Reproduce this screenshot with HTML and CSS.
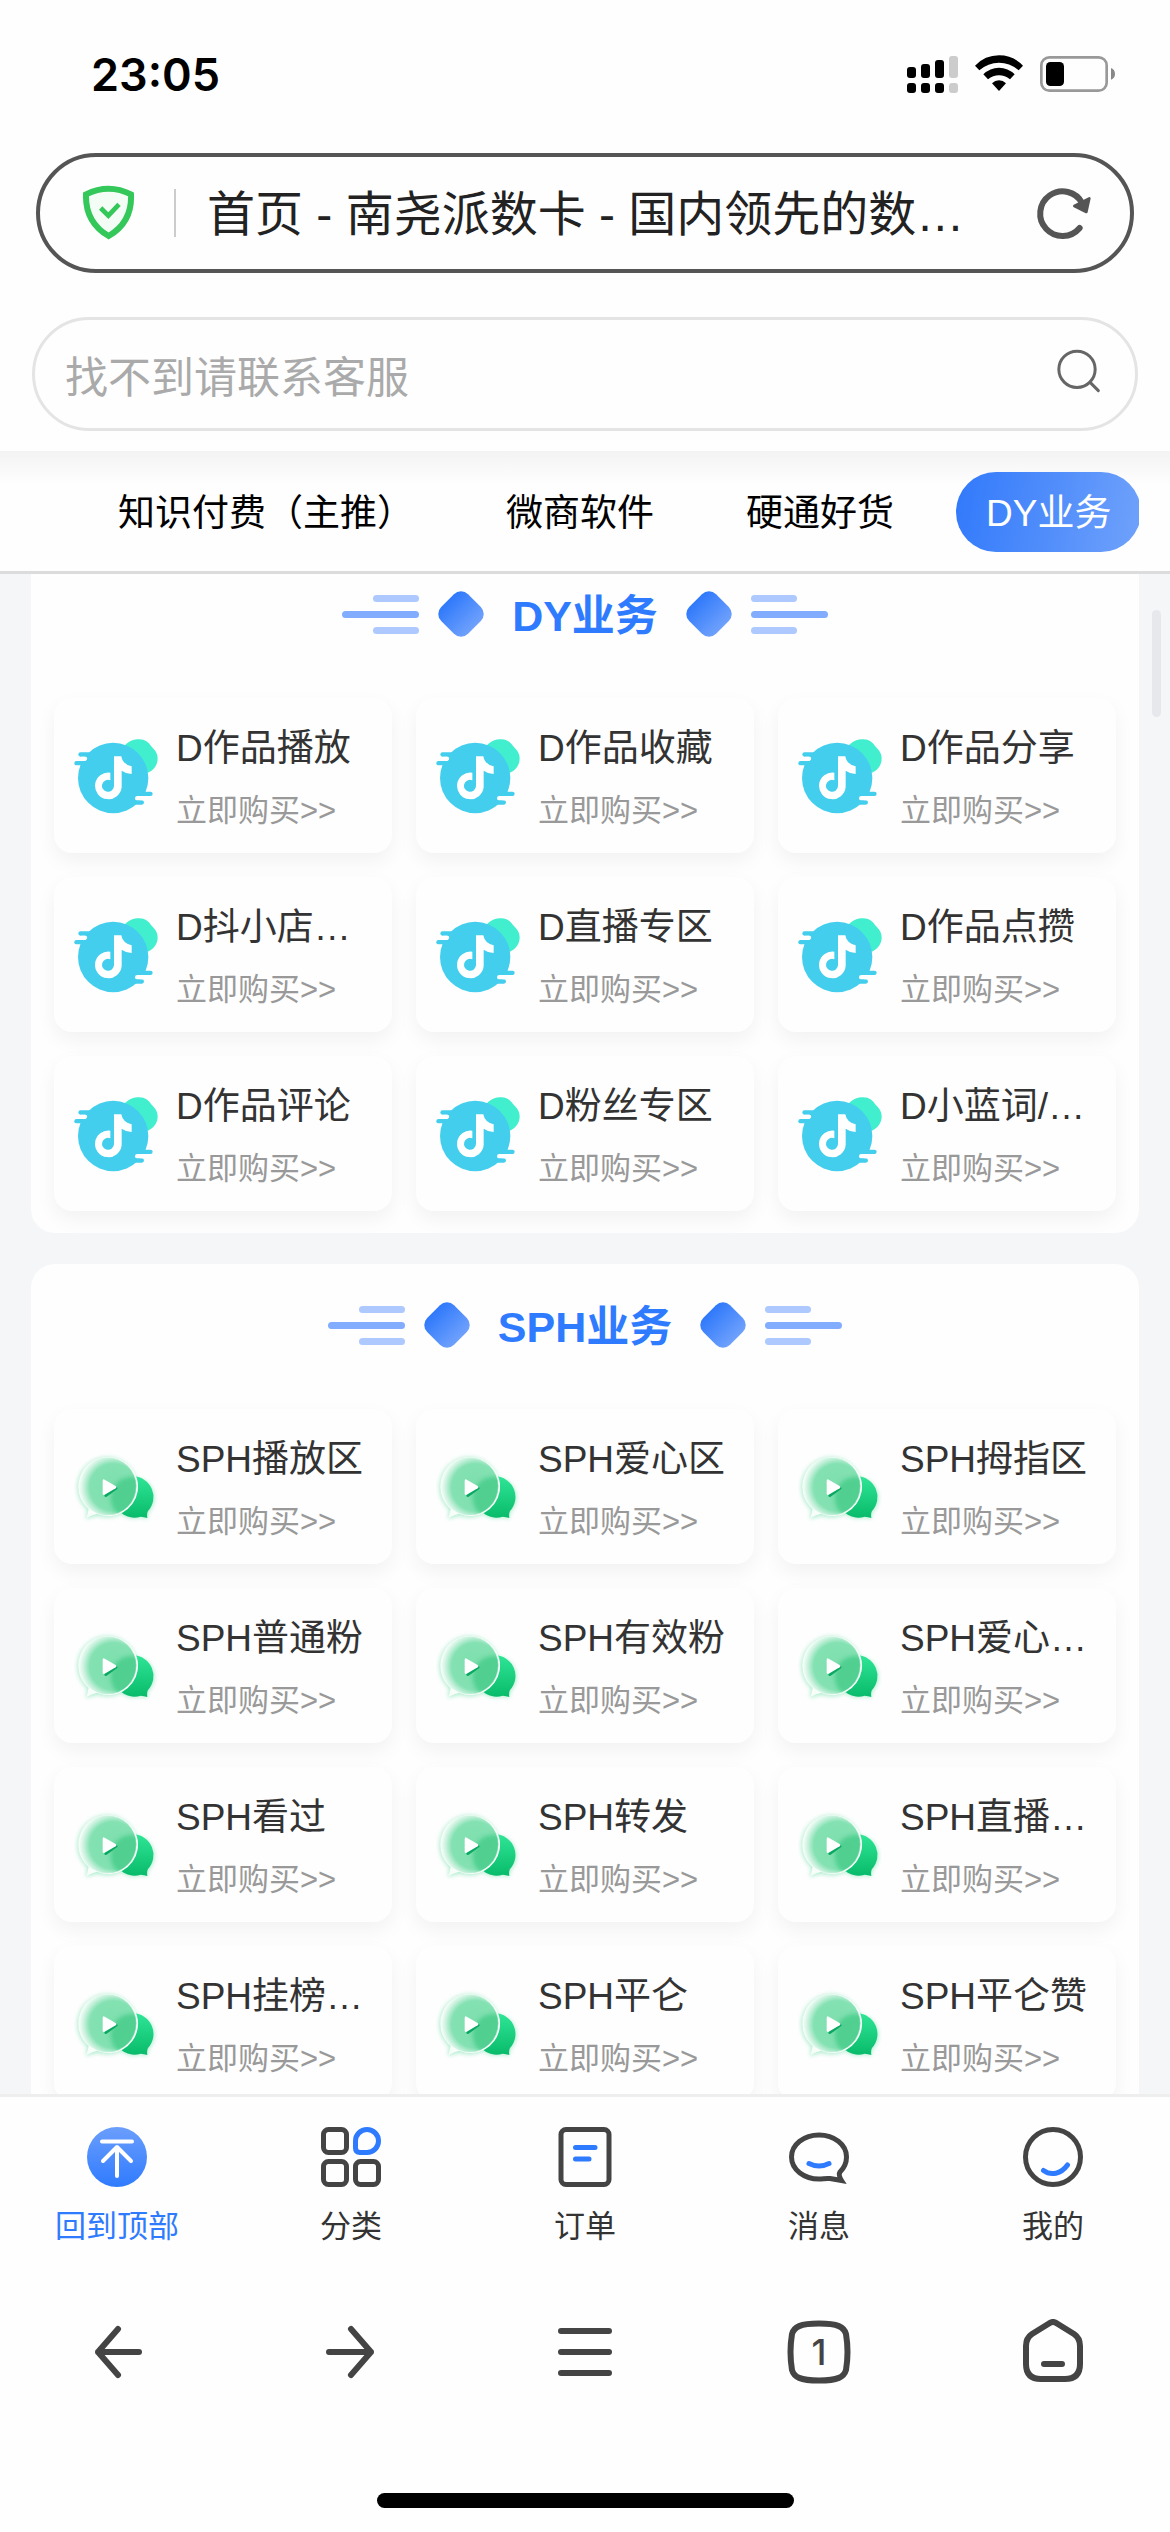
FILE: index.html
```html
<!DOCTYPE html>
<html lang="zh-CN">
<head>
<meta charset="utf-8">
<meta name="viewport" content="width=device-width, initial-scale=1">
<title>首页 - 南尧派数卡</title>
<link rel="stylesheet" href="styles.css">
</head>
<body>
<svg class="defs" aria-hidden="true">
  <defs>
    <linearGradient id="g-back" x1="0" y1="0" x2="0" y2="1"><stop offset="0" stop-color="#6b9efc"/><stop offset="1" stop-color="#2f7bff"/></linearGradient>
    <linearGradient id="g-bubble" x1="0" y1="0" x2="0" y2="1"><stop offset="0" stop-color="#2fe596"/><stop offset="1" stop-color="#08bb6a"/></linearGradient>
    <radialGradient id="g-glass"><stop offset="0" stop-color="#7fdfae"/><stop offset=".68" stop-color="#83e1b2"/><stop offset=".84" stop-color="#c4f0da"/><stop offset="1" stop-color="#fbfffd"/></radialGradient>
    <filter id="f-soft" x="-20%" y="-20%" width="140%" height="140%"><feGaussianBlur stdDeviation="6"/></filter>
    <clipPath id="c-glass"><circle cx="140" cy="167" r="87"/></clipPath>
  </defs>
  <symbol id="i-dy" viewBox="40 50 252 234">
    <path fill="#41efcf" d="M190 78C203 62 219 57 236 57C254 57 263 66 271 77C283 89 291 99 291 114C291 134 279 150 262 157Z"/>
    <circle cx="157.500" cy="173" r="105.500" fill="#43ceee"/>
    <g fill="#43ceee">
      <rect x="53" y="96" width="60" height="13" rx="6.500"/>
      <rect x="41" y="122" width="50" height="13" rx="6.500"/>
      <rect x="220" y="214" width="56" height="13" rx="6.500"/>
      <rect x="200" y="240" width="50" height="13" rx="6.500"/>
    </g>
    <rect x="56" y="109" width="24" height="13" rx="6.500" fill="#fff"/>
    <path fill="#43ceee" d="M80 109H95V122H76Q82 116 80 109Z"/>
    <path fill="#fff" d="M272 227H230Q223 227 223 233.500Q223 240 230 240H258Z"/>
    <path fill="#fff" d="M160 108H182Q186 132 213 138V161Q195 160 183 151V200A40 40 0 1 1 149 157V180A18 18 0 1 0 160 197Z"/>
  </symbol>
  <symbol id="i-sph" viewBox="40 52 252 234">
    <g filter="url(#f-soft)" opacity=".5" fill="#5ddca0">
      <circle cx="140" cy="170" r="90"/><path d="M82 225L76 264L120 252Z"/><circle cx="220" cy="202" r="61"/><path d="M262 235L260 264L230 258Z"/>
    </g>
    <path fill="url(#g-bubble)" d="M218 137A62 62 0 0 1 262 241Q258 247 260 262Q250 259 240 258A62 62 0 1 1 218 137Z"/>
    <path fill="#f7fefa" d="M140 80A88 88 0 1 1 110 249Q96 252 78 261Q82 245 84 234A88 88 0 0 1 140 80Z"/>
    <g clip-path="url(#c-glass)">
      <circle cx="158" cy="170" r="104" fill="url(#g-glass)"/>
      <circle cx="214" cy="202" r="64" fill="#3fca86" opacity=".75" filter="url(#f-soft)"/>
    </g>
    <circle cx="140" cy="167" r="87" fill="none" stroke="#fff" stroke-width="2" opacity=".5"/>
    <path fill="#0aa862" d="M132 156Q132 150 138 154L169 170Q173 173 169 176L138 198Q131 201 131 194Z"/>
    <path fill="#fff" d="M126 151Q126 144 132 147L165 166Q170 170 165 173L132 192Q126 195 126 188Z"/>
  </symbol>
</svg>

<header class="top">
  <div class="status">
    <time class="clock">23:05</time>
    <div class="status-icons">
      <svg width="51" height="39" viewBox="81 75 153 117" role="img" aria-label="信号">
        <g><rect x="81" y="111" width="27" height="33" rx="9"/><rect x="123" y="102" width="27" height="42" rx="9"/><rect x="165" y="90" width="27" height="54" rx="9"/>
        <rect x="81" y="159" width="27" height="30" rx="9"/><rect x="123" y="159" width="27" height="30" rx="9"/><rect x="165" y="159" width="27" height="30" rx="9"/></g>
        <g fill="#ccc"><rect x="207" y="78" width="27" height="66" rx="9"/><rect x="207" y="159" width="27" height="30" rx="9"/></g>
      </svg>
      <svg width="48" height="39" viewBox="285 75 144 117" role="img" aria-label="无线网络">
        <path d="M285 107Q315 76 357 76Q399 76 429 107L416 121Q390 98 357 98Q324 98 298 121Z"/>
        <path d="M310 133Q330 113 357 113Q384 113 404 133L390 148Q375 136 357 136Q339 136 324 148Z"/>
        <path d="M336 160Q345 151 357 151Q369 151 378 160L357 183Z"/>
      </svg>
      <svg width="75" height="39" viewBox="480 75 225 117" role="img" aria-label="电量">
        <rect x="484" y="82" width="196" height="100" rx="24" fill="none" stroke="#999" stroke-width="8"/>
        <rect x="498" y="96" width="54" height="72" rx="13"/>
        <path fill="#888" d="M693 114Q705 119 705 132Q705 145 693 149Z"/>
      </svg>
    </div>
  </div>

  <div class="address">
    <svg width="53" height="56" viewBox="64 50 159 168" aria-hidden="true">
      <path d="M76 78Q110 61 144 61Q178 61 211 78C214 138 190 176 144 203C98 176 74 138 76 78Z" fill="#f4fcf6" stroke="#34c759" stroke-width="18" stroke-linejoin="miter"/>
      <path d="M120 119L143 142L175 108" fill="none" stroke="#34c759" stroke-width="14"/>
    </svg>
    <span class="divider"></span>
    <input class="address-text" type="text" readonly aria-label="网址" value="首页 - 南尧派数卡 - 国内领先的数…">
    <button class="plain" type="button" aria-label="刷新">
      <svg width="56" height="54" viewBox="47 47 168 162" aria-hidden="true">
        <path d="M178 173A67 67 0 1 1 186 99" fill="none" stroke="#555" stroke-width="18" stroke-linecap="round"/>
        <path d="M162 107L207 84L198 125Z" fill="#555" stroke="#555" stroke-width="8" stroke-linejoin="round"/>
      </svg>
    </button>
  </div>

  <form class="search">
    <input class="search-text" type="search" aria-label="搜索" placeholder="找不到请联系客服">
    <button class="plain search-go" type="button" aria-label="搜索">
      <svg width="44" height="44" viewBox="112 537 132 132" aria-hidden="true" fill="none" stroke="#666" stroke-width="9" stroke-linecap="round"><circle cx="172" cy="598" r="54.500"/><path d="M212 638L236 662"/></svg>
    </button>
  </form>
</header>

<nav class="tabs" aria-label="分类">
  <div class="tabs-row">
    <a class="tab" href="#t1">知识付费（主推）</a>
    <a class="tab" href="#t2">微商软件</a>
    <a class="tab" href="#t3">硬通好货</a>
    <a class="tab tab-active" href="#dy">DY业务</a>
  </div>
</nav>

<main class="content">
  <span class="scrollbar"></span>
  <section class="panel panel-first" id="dy">
    <h2 class="title"><span class="lines"><i></i><i></i><i></i></span><span class="gem"></span><span class="title-text">DY业务</span><span class="gem"></span><span class="lines lines-end"><i></i><i></i><i></i></span></h2>
    <div class="grid">
      <a class="card" href="#p"><svg class="pic"><use href="#i-dy"/></svg><span class="info"><span class="name">D作品播放</span><span class="buy">立即购买&gt;&gt;</span></span></a>
      <a class="card" href="#p"><svg class="pic"><use href="#i-dy"/></svg><span class="info"><span class="name">D作品收藏</span><span class="buy">立即购买&gt;&gt;</span></span></a>
      <a class="card" href="#p"><svg class="pic"><use href="#i-dy"/></svg><span class="info"><span class="name">D作品分享</span><span class="buy">立即购买&gt;&gt;</span></span></a>
      <a class="card" href="#p"><svg class="pic"><use href="#i-dy"/></svg><span class="info"><span class="name">D抖小店…</span><span class="buy">立即购买&gt;&gt;</span></span></a>
      <a class="card" href="#p"><svg class="pic"><use href="#i-dy"/></svg><span class="info"><span class="name">D直播专区</span><span class="buy">立即购买&gt;&gt;</span></span></a>
      <a class="card" href="#p"><svg class="pic"><use href="#i-dy"/></svg><span class="info"><span class="name">D作品点攒</span><span class="buy">立即购买&gt;&gt;</span></span></a>
      <a class="card" href="#p"><svg class="pic"><use href="#i-dy"/></svg><span class="info"><span class="name">D作品评论</span><span class="buy">立即购买&gt;&gt;</span></span></a>
      <a class="card" href="#p"><svg class="pic"><use href="#i-dy"/></svg><span class="info"><span class="name">D粉丝专区</span><span class="buy">立即购买&gt;&gt;</span></span></a>
      <a class="card" href="#p"><svg class="pic"><use href="#i-dy"/></svg><span class="info"><span class="name">D小蓝词/…</span><span class="buy">立即购买&gt;&gt;</span></span></a>
    </div>
  </section>
  <section class="panel" id="sph">
    <h2 class="title"><span class="lines"><i></i><i></i><i></i></span><span class="gem"></span><span class="title-text">SPH业务</span><span class="gem"></span><span class="lines lines-end"><i></i><i></i><i></i></span></h2>
    <div class="grid">
      <a class="card" href="#p"><svg class="pic"><use href="#i-sph"/></svg><span class="info"><span class="name">SPH播放区</span><span class="buy">立即购买&gt;&gt;</span></span></a>
      <a class="card" href="#p"><svg class="pic"><use href="#i-sph"/></svg><span class="info"><span class="name">SPH爱心区</span><span class="buy">立即购买&gt;&gt;</span></span></a>
      <a class="card" href="#p"><svg class="pic"><use href="#i-sph"/></svg><span class="info"><span class="name">SPH拇指区</span><span class="buy">立即购买&gt;&gt;</span></span></a>
      <a class="card" href="#p"><svg class="pic"><use href="#i-sph"/></svg><span class="info"><span class="name">SPH普通粉</span><span class="buy">立即购买&gt;&gt;</span></span></a>
      <a class="card" href="#p"><svg class="pic"><use href="#i-sph"/></svg><span class="info"><span class="name">SPH有效粉</span><span class="buy">立即购买&gt;&gt;</span></span></a>
      <a class="card" href="#p"><svg class="pic"><use href="#i-sph"/></svg><span class="info"><span class="name">SPH爱心…</span><span class="buy">立即购买&gt;&gt;</span></span></a>
      <a class="card" href="#p"><svg class="pic"><use href="#i-sph"/></svg><span class="info"><span class="name">SPH看过</span><span class="buy">立即购买&gt;&gt;</span></span></a>
      <a class="card" href="#p"><svg class="pic"><use href="#i-sph"/></svg><span class="info"><span class="name">SPH转发</span><span class="buy">立即购买&gt;&gt;</span></span></a>
      <a class="card" href="#p"><svg class="pic"><use href="#i-sph"/></svg><span class="info"><span class="name">SPH直播…</span><span class="buy">立即购买&gt;&gt;</span></span></a>
      <a class="card" href="#p"><svg class="pic"><use href="#i-sph"/></svg><span class="info"><span class="name">SPH挂榜…</span><span class="buy">立即购买&gt;&gt;</span></span></a>
      <a class="card" href="#p"><svg class="pic"><use href="#i-sph"/></svg><span class="info"><span class="name">SPH平仑</span><span class="buy">立即购买&gt;&gt;</span></span></a>
      <a class="card" href="#p"><svg class="pic"><use href="#i-sph"/></svg><span class="info"><span class="name">SPH平仑赞</span><span class="buy">立即购买&gt;&gt;</span></span></a>
    </div>
  </section>
</main>

<footer class="bottom">
  <nav class="menu" aria-label="主导航">
    <a class="menu-item menu-active" href="#top">
      <svg width="60" height="60" viewBox="0 0 60 60" aria-hidden="true"><circle cx="30" cy="30" r="30" fill="url(#g-back)"/><path d="M15 14.500H45M30 20V49M16 34L30 20L44 34" fill="none" stroke="#fff" stroke-width="4" stroke-linecap="round" stroke-linejoin="round"/></svg>
      回到顶部</a>
    <a class="menu-item" href="#cat">
      <svg width="60" height="60" viewBox="0 0 60 60" aria-hidden="true" fill="none" stroke="#444" stroke-width="5"><rect x="2.500" y="2.500" width="23" height="23" rx="5"/><rect x="2.500" y="34.500" width="23" height="23" rx="5"/><rect x="34.500" y="34.500" width="23" height="23" rx="5"/><path stroke="#2f7bff" d="M34.500 14A11.500 11.500 0 1 1 46 25.500H39Q34.500 25.500 34.500 21Z"/></svg>
      分类</a>
    <a class="menu-item" href="#order">
      <svg width="60" height="60" viewBox="0 0 60 60" aria-hidden="true" fill="none" stroke="#444" stroke-width="5" stroke-linecap="round"><rect x="6" y="2.500" width="48" height="55" rx="5"/><path stroke="#2f7bff" d="M20.500 20.500H40M20.500 32H34"/></svg>
      订单</a>
    <a class="menu-item" href="#msg">
      <svg width="60" height="60" viewBox="0 0 60 60" aria-hidden="true" fill="none" stroke="#444" stroke-width="5"><path d="M51 45C55 41 57.500 36 57.500 30C57.500 17.500 45 8 30 8S2.500 17.500 2.500 30S15 52 30 52C34 52 37 51 41 51.500Q47 52.500 52.500 53.500Q49 48 51 45Z"/><path stroke="#2f7bff" stroke-linecap="round" d="M20 36.500Q30 41.500 40 36.500"/></svg>
      消息</a>
    <a class="menu-item" href="#me">
      <svg width="60" height="60" viewBox="0 0 60 60" aria-hidden="true" fill="none" stroke="#444" stroke-width="5"><circle cx="30" cy="30" r="27.500"/><path stroke="#2f7bff" stroke-linecap="round" d="M20.500 43.500C28 49 38 47 44.500 38"/></svg>
      我的</a>
  </nav>
  <div class="toolbar">
    <button class="plain" type="button" aria-label="后退"><svg class="tool" viewBox="0 0 66 66"><path d="M34 10L14 33L34 56M14 33H55"/></svg></button>
    <button class="plain" type="button" aria-label="前进"><svg class="tool" viewBox="0 0 66 66"><path d="M33 10L53 33L33 56M53 33H11"/></svg></button>
    <button class="plain" type="button" aria-label="菜单"><svg class="tool" viewBox="0 0 66 66"><path d="M9 12H57M9 33H57M9 54H57"/></svg></button>
    <button class="plain windows" type="button" aria-label="窗口"><svg class="tool" viewBox="0 0 66 66"><path d="M33 4.500C52 4.500 58 8 60 15Q61.500 24 61.500 33T60 51C58 58 52 61.500 33 61.500S8 58 6 51Q4.500 42 4.500 33T6 15C8 8 14 4.500 33 4.500Z"/></svg><span class="count">1</span></button>
    <button class="plain" type="button" aria-label="主页"><svg class="tool" viewBox="0 0 66 66"><path d="M29 4.500Q33 1.500 37 4.500L54 15Q60 19 60 27V45Q60 60 45 60H21Q6 60 6 45V27Q6 19 12 15ZM24 45H42"/></svg></button>
  </div>
  <div class="home-bar"></div>
</footer>
</body>
</html>
```
FILE: styles.css
```css
* { box-sizing: border-box; }

body {
  margin: 0;
  height: 100vh;
  display: flex;
  flex-direction: column;
  background: #fefefe;
  color: #333;
  font-family: "Liberation Sans", "Noto Sans CJK SC", sans-serif;
  font-weight: 400;
}

a { color: inherit; text-decoration: none; }
svg { display: block; flex: none; }

.defs { position: absolute; width: 0; height: 0; }

.plain {
  padding: 0;
  border: 0;
  background: none;
  color: inherit;
  font: inherit;
}

/* status bar, address bar and search */
.top {
  position: relative;
  z-index: 2;
  padding-bottom: 20px;
}

.status {
  display: flex;
  align-items: center;
  justify-content: space-between;
  height: 149px;
  padding: 0 55px 0 91px;
  color: #000;
}

.clock {
  font-family: Inter, sans-serif;
  font-size: 45px;
  font-weight: 600;
}

.status-icons { display: flex; gap: 17px; }

.address {
  display: flex;
  align-items: center;
  height: 120px;
  margin: 4px 36px 44px;
  padding: 0 38px 0 42px;
  border: 4px solid #555;
  border-radius: 60px;
}

.divider {
  width: 2px;
  height: 48px;
  margin: 0 31px 0 39px;
  background: #ccc;
}

.address-text,
.search-text {
  flex: 1;
  min-width: 0;
  height: 80px;
  padding: 0;
  border: 0;
  outline: 0;
  background: none;
  font-family: inherit;
}

.address-text {
  padding-bottom: 6px;
  font-size: 48px;
  color: #222;
}

.search {
  display: flex;
  align-items: center;
  height: 114px;
  margin: 0 32px;
  padding: 0 34px 0 30px;
  border: 3px solid #e4e4e4;
  border-radius: 57px;
}

.search-text { padding-top: 8px; font-size: 43px; }
.search-text::placeholder { color: #aaa; opacity: 1; }
.search-go { padding-bottom: 6px; }

/* category tabs */
.tabs {
  padding: 0 31px;
  border-bottom: 3px solid #dcdcdc;
  background: linear-gradient(#f3f3f3, #fefefe 34px);
}

.tabs-row {
  display: flex;
  align-items: center;
  gap: 32px;
  height: 120px;
  padding: 2px 0 0 57px;
  overflow: hidden;
}

.tab {
  flex: none;
  padding: 4px 30px 0;
  border-radius: 40px;
  font-size: 37px;
  line-height: 76px;
  color: #000;
}

.tab-active {
  background: linear-gradient(100deg, #3179fb, #70a2fb);
  color: #fff;
}

/* product panels */
.content {
  position: relative;
  flex: 1;
  min-height: 0;
  overflow: hidden;
  padding: 0 31px;
  background: #f4f6f8;
}

.scrollbar {
  position: absolute;
  top: 36px;
  right: 9px;
  width: 9px;
  height: 107px;
  border-radius: 5px;
  background: #e7e8eb;
}

.panel {
  margin-bottom: 31px;
  padding: 21px 23px 22px;
  border-radius: 24px;
  background: #fefefe;
}

.panel-first {
  padding-top: 0;
  border-radius: 0 0 24px 24px;
}

.title {
  display: flex;
  align-items: center;
  justify-content: center;
  gap: 32px;
  height: 80px;
  margin: 0 0 44px;
  font-size: 43px;
  font-weight: 700;
  color: #2f7bff;
}

.title-text { padding-bottom: 4px; }

.lines {
  display: grid;
  gap: 9px;
  width: 77px;
  margin-right: -9px;
}

.lines i {
  justify-self: end;
  width: 46px;
  height: 7px;
  border-radius: 4px;
  background: #adc9ff;
}

.lines i:nth-child(2) { width: 77px; background: #82adff; }
.lines-end { margin: 0 0 0 -9px; }
.lines-end i { justify-self: start; }

.gem {
  width: 38px;
  height: 38px;
  border-radius: 10px;
  background: linear-gradient(90deg, #2f79fb, #6fa1fc);
  transform: rotate(45deg);
}

.grid {
  display: grid;
  grid-template-columns: repeat(3, minmax(0, 1fr));
  gap: 24px;
}

.card {
  display: flex;
  align-items: center;
  gap: 18px;
  height: 155px;
  padding: 0 0 0 20px;
  border-radius: 18px;
  background: #fefefe;
  box-shadow: 0 8px 20px rgba(0, 0, 0, .05);
}

.pic { width: 84px; height: 78px; }

.info {
  display: grid;
  gap: 12px;
  min-width: 0;
  padding-top: 4px;
  white-space: nowrap;
}

.name { font-size: 37px; line-height: 54px; }
.buy { font-size: 31px; line-height: 46px; color: #999; }

/* site menu and browser toolbar */
.bottom {
  border-top: 3px solid #eee;
  background: #fefefe;
}

.menu,
.toolbar {
  display: grid;
  grid-template-columns: repeat(5, 1fr);
  justify-items: center;
}

.menu { padding-top: 30px; }

.menu-item {
  display: grid;
  justify-items: center;
  gap: 20px;
  font-size: 31px;
  line-height: 40px;
}

.menu-active { color: #2f7bff; }

.toolbar { padding: 72px 0 108px; }

.tool {
  width: 66px;
  height: 66px;
  fill: none;
  stroke: #444;
  stroke-width: 6;
  stroke-linecap: round;
  stroke-linejoin: round;
}

.windows { display: grid; place-items: center; }
.windows > * { grid-area: 1 / 1; }

.count {
  font-family: Inter, sans-serif;
  font-size: 36px;
  font-weight: 500;
  color: #444;
}

.home-bar {
  width: 417px;
  height: 15px;
  margin: 0 auto 24px;
  border-radius: 8px;
  background: #000;
}
```
